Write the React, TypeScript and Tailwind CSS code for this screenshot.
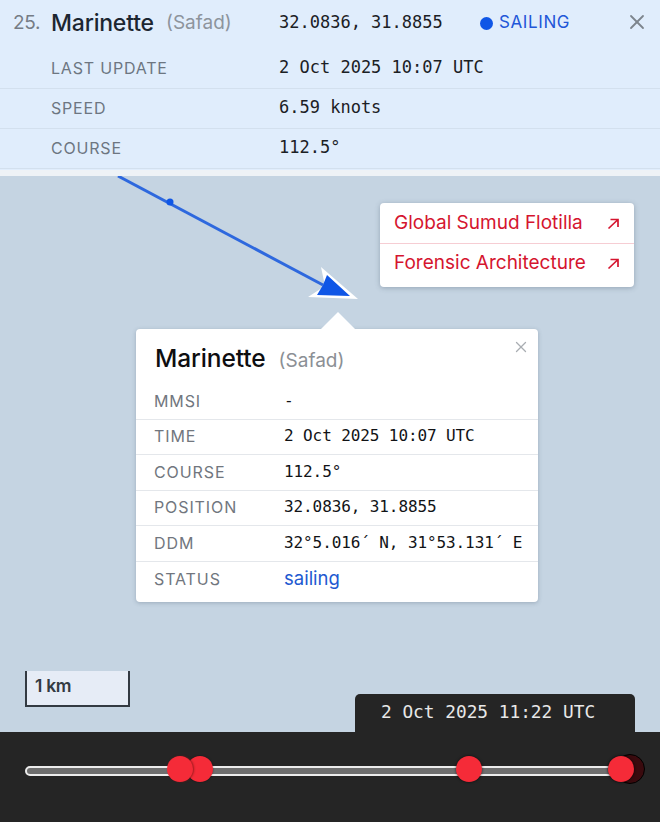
import { X } from "lucide-react";

const sans = "font-['Inter','Liberation_Sans',sans-serif]";
const mono = "font-['DejaVu_Sans_Mono','Liberation_Mono',monospace]";

const vesselRows = [
  { label: "LAST UPDATE", value: "2 Oct 2025 10:07 UTC" },
  { label: "SPEED", value: "6.59 knots" },
  { label: "COURSE", value: "112.5°" },
];

const popupRows = [
  { label: "MMSI", value: "-" },
  { label: "TIME", value: "2 Oct 2025 10:07 UTC" },
  { label: "COURSE", value: "112.5°" },
  { label: "POSITION", value: "32.0836, 31.8855" },
  { label: "DDM", value: "32°5.016´ N, 31°53.131´ E" },
  { label: "STATUS", value: "sailing" },
];

const links = ["Global Sumud Flotilla", "Forensic Architecture"];

function NorthEast() {
  return (
    <svg width="13" height="13" viewBox="0 0 13 13" fill="none" stroke="#d5152f" strokeWidth="1.7">
      <path d="M1.5 11.5L11 2.5M3.5 2.5H11V10" />
    </svg>
  );
}

function VesselPanel() {
  return (
    <div className="bg-[#e0edfc] h-[170px] shrink-0 flex flex-col">
      <div className="h-[49px] pb-[3px] flex items-center relative">
        <span className="w-[51px] pl-[13px] text-[19px] text-[#757c85] tracking-[-0.3px]">25.</span>
        <span className="w-[115px] text-[23px] font-medium text-[#1c2631] tracking-[-0.2px]">Marinette</span>
        <span className="w-[113px] text-[19px] text-[#8d949c]">(Safad)</span>
        <span className={`w-[201px] ${mono} text-[17px] text-[#1b2024]`}>32.0836, 31.8855</span>
        <span className="w-[13px] h-[13px] rounded-full bg-[#0f56e6]" />
        <span className="ml-[6px] text-[17px] text-[#2257d8] tracking-[0.6px]">SAILING</span>
        <X className="absolute left-[625px] top-[10px] text-[#7d858d]" size={24} strokeWidth={1.8} />
      </div>
      {vesselRows.map((row) => (
        <div key={row.label} className="h-[40px] pb-[2px] flex items-center border-b border-[#d3e0ee]">
          <span className="w-[279px] pl-[51px] text-[16px] text-[#6d7681] tracking-[0.8px]">{row.label}</span>
          <span className={`${mono} text-[17px] text-[#1b2024]`}>{row.value}</span>
        </div>
      ))}
    </div>
  );
}

function ExternalLinks() {
  return (
    <div className="absolute left-[380px] top-[27px] w-[254px] h-[84px] bg-white rounded-[4px] shadow-[0_1px_5px_rgba(60,80,100,0.35)] flex flex-col">
      {links.map((link, i) => (
        <div
          key={link}
          className={`px-[14px] flex items-center justify-between text-[19px] text-[#d5152f] ${i === 0 ? "h-[41px] border-b border-[#f6cdd3]" : "h-[43px] pb-[5px]"}`}
        >
          <span>{link}</span>
          <NorthEast />
        </div>
      ))}
    </div>
  );
}

function VesselPopup() {
  return (
    <div className="absolute left-[136px] top-[153px] w-[402px] h-[273px] bg-white rounded-[4px] shadow-[0_1px_4px_rgba(60,80,100,0.3)]">
      <div className="absolute left-[185px] top-[-17px] w-0 h-0 border-l-[17px] border-r-[17px] border-b-[17px] border-l-transparent border-r-transparent border-b-white" />
      <X className="absolute right-[8px] top-[9px] text-[#a9adb2]" size={18} strokeWidth={1.7} />
      <div className="h-[55px] pl-[19px] pt-[11px] flex items-baseline">
        <span className="text-[24.5px] font-medium text-[#0e0e10] tracking-[-0.1px]">Marinette</span>
        <span className="ml-[13px] text-[19px] text-[#8b8f95]">(Safad)</span>
      </div>
      {popupRows.map((row, i) => (
        <div
          key={row.label}
          className={`h-[35.5px] flex items-center pb-[1px] ${i < popupRows.length - 1 ? "border-b border-[#e4e7eb]" : ""}`}
        >
          <span className="w-[148px] pl-[18px] text-[16px] text-[#71767e] tracking-[0.9px]">{row.label}</span>
          {row.label === "STATUS" ? (
            <span className="text-[18.5px] text-[#2259d1]">{row.value}</span>
          ) : (
            <span className={`${mono} text-[16px] tracking-[-0.1px] text-[#111316]`}>{row.value}</span>
          )}
        </div>
      ))}
    </div>
  );
}

function MapArea() {
  return (
    <div className="relative flex-1 bg-[#c5d4e2] border-t-[6px] border-[#eef2f6]">
      <svg className="absolute left-0 top-0" width="660" height="140" viewBox="0 0 660 140" fill="none">
        <path d="M118 0L323 109" stroke="#2e68de" strokeWidth="3" />
        <circle cx="170" cy="26" r="3.5" fill="#0f56e6" />
        <path d="M321 91L358 123L308 121L325 110Z" fill="#ffffff" />
        <path d="M327 99L350 120L317 119L323 109Z" fill="#0f56e6" />
      </svg>
      <ExternalLinks />
      <VesselPopup />
      <div className="absolute left-[25px] top-[495px] w-[105px] h-[36px] bg-[#e6ecf6] border-x-2 border-b-2 border-[#333a42] pl-[8px] pb-[3px] flex items-center">
        <span className="text-[17.5px] font-semibold text-[#333a42] tracking-[-0.3px]">1 km</span>
      </div>
      <div className="absolute left-[355px] bottom-0 w-[280px] h-[38px] bg-[#252525] rounded-t-[5px] pl-[26px] pt-[5px]">
        <span className={`${mono} text-[17.8px] text-[#e8e8e8]`}>2 Oct 2025 11:22 UTC</span>
      </div>
    </div>
  );
}

function Marker({ left, ring }: { left: string; ring: string }) {
  return (
    <div className={`absolute top-[-12px] w-[26px] h-[26px] rounded-full bg-[#f52b38] ${left} ${ring}`} />
  );
}

function Timeline() {
  return (
    <div className="h-[90px] shrink-0 bg-[#252525] px-[25px] pt-[34px]">
      <div className="relative h-[10px] w-[600px] bg-[#6e6e6e] border-2 border-[#ececec] rounded-l-full">
        <div className="absolute left-[588px] top-[-14px] w-[30px] h-[30px] rounded-full bg-[#3a0a0e] border border-black" />
        <Marker left="left-[160px]" ring="shadow-[0_0_2px_rgba(0,0,0,0.5)]" />
        <Marker left="left-[140px]" ring="shadow-[1px_0_2px_rgba(120,20,20,0.7)]" />
        <Marker left="left-[429px]" ring="shadow-[0_0_3px_rgba(0,0,0,0.7)]" />
        <Marker left="left-[581px]" ring="shadow-[0_0_3px_rgba(0,0,0,0.9)]" />
      </div>
    </div>
  );
}

export default function App() {
  return (
    <div className={`w-[660px] h-[822px] flex flex-col overflow-hidden ${sans}`}>
      <VesselPanel />
      <MapArea />
      <Timeline />
    </div>
  );
}
